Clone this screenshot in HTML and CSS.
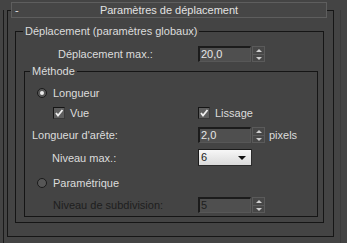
FILE: index.html
```html
<!DOCTYPE html>
<html lang="fr">

<head>
  <meta charset="utf-8">
  <title>Paramètres de déplacement</title>
  <link rel="stylesheet" href="styles.css">
</head>

<body>
  <div class="cmd">
    <div class="rollout">
      <div class="rollout-head">
        <span class="toggle">-</span>
        <span class="head-title">Paramètres de déplacement</span>
      </div>

      <fieldset class="group g1">
        <legend>Déplacement (paramètres globaux)</legend>
        <div class="row row-max">
          <span class="label label-wide in-35">Déplacement max.:</span>
          <span class="field">20,0</span>
          <span class="spin"><i class="up"></i><i class="down"></i></span>
        </div>

        <fieldset class="group g2">
          <legend>Méthode</legend>
          <div class="row r1">
            <span class="label in-7"><span class="radio on"></span>Longueur</span>
          </div>
          <div class="row r2">
            <span class="label in-23"><span class="check"><svg viewBox="0 0 10 10"><polyline points="2,5 4,7.5 8.5,2" /></svg></span>Vue</span>
            <span class="opt"><span class="check"><svg viewBox="0 0 10 10"><polyline points="2,5 4,7.5 8.5,2" /></svg></span>Lissage</span>
          </div>
          <div class="row r3">
            <span class="label in-2">Longueur d'arête:</span>
            <span class="field">2,0</span>
            <span class="spin"><i class="up"></i><i class="down"></i></span>
            <span class="unit">pixels</span>
          </div>
          <div class="row r4">
            <span class="label in-22">Niveau max.:</span>
            <span class="select">6<i class="arrow"></i></span>
          </div>
          <div class="row r5">
            <span class="label in-7"><span class="radio"></span>Paramétrique</span>
          </div>
          <div class="row r6 off">
            <span class="label in-23">Niveau de subdivision:</span>
            <span class="field">5</span>
            <span class="spin"><i class="up"></i><i class="down"></i></span>
          </div>
        </fieldset>
      </fieldset>
    </div>
  </div>
</body>

</html>
```

FILE: styles.css
```css
html,
body {
  margin: 0;
  height: 100%;
  background-color: #444444;
  font-family: 'Liberation Sans', 'Arial', sans-serif;
  font-size: 11px;
  color: #dcdcdc;
}

.cmd {
  width: 338px;
  height: 233px;
  margin: 10px 0 0 3px;
  border-left: 1px solid #1a1a1a;
  border-right: 1px solid #3b3b3b;
  box-sizing: border-box;
}

.rollout {
  width: 327px;
  height: 227px;
  margin: 1px 0 0 3px;
  border: 1px solid #161616;
  box-sizing: border-box;
}

.rollout-head {
  display: grid;
  grid-template-columns: 1fr auto 1fr;
  align-items: center;
  height: 16px;
  margin: -9px 6px 0 3px;
  border: 1px solid #5e5e5e;
  background-color: #464646;
  box-sizing: border-box;
  line-height: 14px;
  color: #e2e2e2;
}

.toggle {
  padding-left: 3px;
}

/* group boxes */
.group {
  margin: 0;
  padding: 0;
  border: 1px solid #151515;
  min-width: 0;
}

.group legend {
  padding: 0 2px;
  line-height: 13px;
}

.g1 {
  margin: 7px 9px 0 7px;
  padding: 0 0 5px 7px;
}

.g2 {
  margin: 3px 5px 0 1px;
  padding: 0 0 3px 5px;
}

.row {
  display: flex;
  align-items: center;
  height: 16px;
}

.row-max {
  margin-top: 8px;
}

.r1 {
  margin-top: 7px;
}

.r2 {
  margin-top: 4px;
}

.r3,
.r4,
.r6 {
  margin-top: 6px;
}

.r4 {
  height: 17px;
}

.r5 {
  margin-top: 9px;
}

.label {
  flex: 0 0 168px;
  display: flex;
  align-items: center;
  box-sizing: border-box;
}

.label-wide {
  flex-basis: 175px;
}

.in-2 { padding-left: 2px; }
.in-7 { padding-left: 7px; }
.in-22 { padding-left: 22px; }
.in-23 { padding-left: 23px; }
.in-35 { padding-left: 35px; }

.opt {
  display: flex;
  align-items: center;
}

/* inputs */
.field {
  width: 53px;
  height: 16px;
  box-sizing: border-box;
  padding-left: 1px;
  border-top: 2px solid #1b1b1b;
  border-left: 2px solid #1b1b1b;
  border-right: 1px solid #575757;
  border-bottom: 1px solid #575757;
  background-color: #4f4f4f;
  color: #e6e6e6;
  line-height: 13px;
}

.spin {
  display: flex;
  flex-direction: column;
  width: 13px;
  height: 16px;
  margin-left: 1px;
  box-sizing: border-box;
  border: 1px solid #5a5a5a;
  background-color: #474747;
}

.spin i {
  flex: 1;
  position: relative;
}

.spin .up {
  border-bottom: 1px solid #5a5a5a;
}

.spin i::after {
  content: '';
  position: absolute;
  left: 3px;
  top: 2px;
  border-left: 3px solid transparent;
  border-right: 3px solid transparent;
}

.spin .up::after {
  border-bottom: 3px solid #cfcfcf;
}

.spin .down::after {
  top: 2px;
  border-top: 3px solid #cfcfcf;
}

.unit {
  margin-left: 4px;
}

.select {
  position: relative;
  width: 54px;
  height: 17px;
  box-sizing: border-box;
  padding-left: 2px;
  border-top: 1px solid #1b1b1b;
  border-left: 1px solid #1b1b1b;
  border-right: 1px solid #2b2b2b;
  border-bottom: 1px solid #2b2b2b;
  background: linear-gradient(#f7f7f7, #dadada);
  color: #1c1c1c;
  line-height: 15px;
}

.select .arrow {
  position: absolute;
  right: 5px;
  top: 6px;
  border-left: 4px solid transparent;
  border-right: 4px solid transparent;
  border-top: 4px solid #111;
}

.radio {
  width: 10px;
  height: 10px;
  margin-right: 6px;
  box-sizing: border-box;
  border-radius: 50%;
  border: 1px solid #1a1a1a;
  background-color: #565656;
  position: relative;
}

.radio.on::after {
  content: '';
  position: absolute;
  left: 2px;
  top: 2px;
  width: 4px;
  height: 4px;
  border-radius: 50%;
  background-color: #ececec;
}

.check {
  width: 12px;
  height: 12px;
  margin-right: 5px;
  box-sizing: border-box;
  border-top: 1px solid #151515;
  border-left: 1px solid #151515;
  border-right: 1px solid #3a3a3a;
  border-bottom: 1px solid #3a3a3a;
  background-color: #5e5e5e;
}

.check svg {
  display: block;
  width: 10px;
  height: 10px;
}

.check polyline {
  fill: none;
  stroke: #f0f0f0;
  stroke-width: 1.8;
}

.off .label,
.off .field {
  color: #1e1e1e;
}
```
